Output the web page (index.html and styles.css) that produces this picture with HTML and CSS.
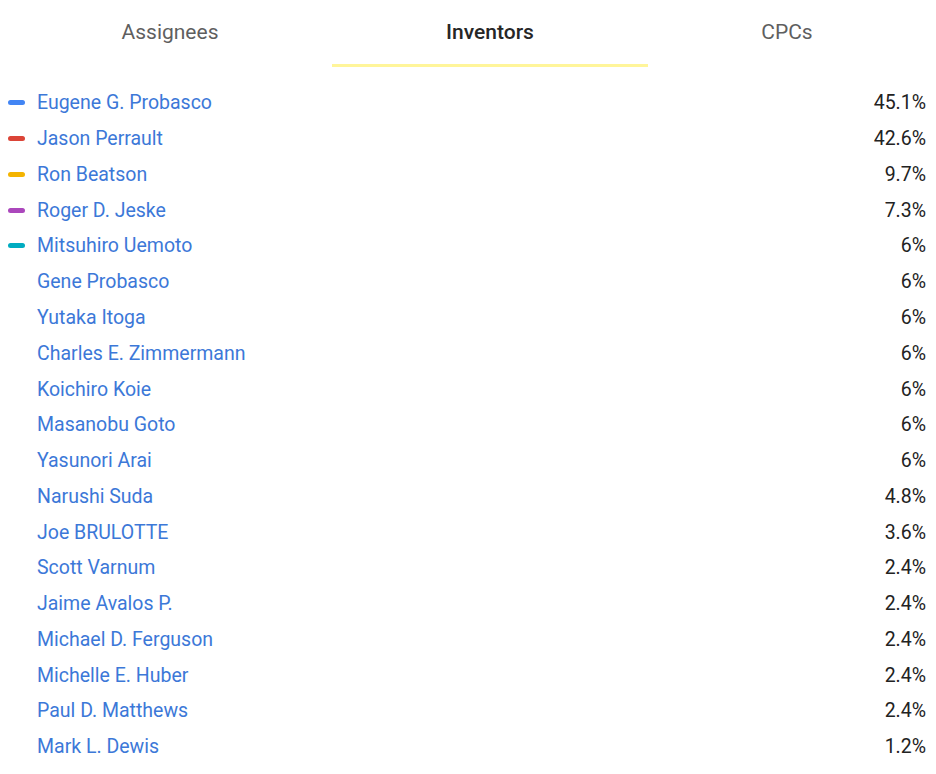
FILE: index.html
```html
<!DOCTYPE html>
<html>
<head>
<meta charset="utf-8">
<link rel="stylesheet" href="styles.css">
</head>
<body>
<div class="tabs">
  <div class="tab tab-a">Assignees</div>
  <div class="tab tab-b active">Inventors</div>
  <div class="tab tab-c">CPCs</div>
</div>
<ul class="list">
  <li class="row"><span class="mark m-blue"></span><span class="name">Eugene G. Probasco</span><span class="pct">45.1%</span></li>
  <li class="row"><span class="mark m-red"></span><span class="name">Jason Perrault</span><span class="pct">42.6%</span></li>
  <li class="row"><span class="mark m-yellow"></span><span class="name">Ron Beatson</span><span class="pct">9.7%</span></li>
  <li class="row"><span class="mark m-purple"></span><span class="name">Roger D. Jeske</span><span class="pct">7.3%</span></li>
  <li class="row"><span class="mark m-teal"></span><span class="name">Mitsuhiro Uemoto</span><span class="pct">6%</span></li>
  <li class="row"><span class="mark"></span><span class="name">Gene Probasco</span><span class="pct">6%</span></li>
  <li class="row"><span class="mark"></span><span class="name">Yutaka Itoga</span><span class="pct">6%</span></li>
  <li class="row"><span class="mark"></span><span class="name">Charles E. Zimmermann</span><span class="pct">6%</span></li>
  <li class="row"><span class="mark"></span><span class="name">Koichiro Koie</span><span class="pct">6%</span></li>
  <li class="row"><span class="mark"></span><span class="name">Masanobu Goto</span><span class="pct">6%</span></li>
  <li class="row"><span class="mark"></span><span class="name">Yasunori Arai</span><span class="pct">6%</span></li>
  <li class="row"><span class="mark"></span><span class="name">Narushi Suda</span><span class="pct">4.8%</span></li>
  <li class="row"><span class="mark"></span><span class="name">Joe BRULOTTE</span><span class="pct">3.6%</span></li>
  <li class="row"><span class="mark"></span><span class="name">Scott Varnum</span><span class="pct">2.4%</span></li>
  <li class="row"><span class="mark"></span><span class="name">Jaime Avalos P.</span><span class="pct">2.4%</span></li>
  <li class="row"><span class="mark"></span><span class="name">Michael D. Ferguson</span><span class="pct">2.4%</span></li>
  <li class="row"><span class="mark"></span><span class="name">Michelle E. Huber</span><span class="pct">2.4%</span></li>
  <li class="row"><span class="mark"></span><span class="name">Paul D. Matthews</span><span class="pct">2.4%</span></li>
  <li class="row"><span class="mark"></span><span class="name">Mark L. Dewis</span><span class="pct">1.2%</span></li>
</ul>
</body>
</html>
```
FILE: styles.css
```css
html, body {
  margin: 0;
  padding: 0;
  background: #ffffff;
  font-family: Roboto, "Liberation Sans", Arial, sans-serif;
}
.tabs {
  display: flex;
  height: 67px;
  padding-left: 12px;
}
.tab {
  box-sizing: border-box;
  height: 67px;
  padding-top: 18px;
  text-align: center;
  font-size: 21px;
  line-height: 28px;
  color: #5f5f5f;
  border-bottom: 3px solid transparent;
}
.tab-a { width: 316px; margin-right: 4px; }
.tab-b { width: 316px; }
.tab-c { width: 278px; }
.tab.active {
  color: #262626;
  font-weight: 500;
  border-bottom-color: #fff59a;
}
.list {
  list-style: none;
  margin: 0;
  padding: 18px 10px 0 8px;
}
.row {
  display: flex;
  align-items: center;
  height: 35.78px;
  font-size: 19.5px;
}
.mark {
  width: 17px;
  height: 5px;
  border-radius: 3px;
  margin-right: 12px;
  flex: none;
}
.m-blue { background: #4285f4; }
.m-red { background: #db4437; }
.m-yellow { background: #f4b400; }
.m-purple { background: #ab47bc; }
.m-teal { background: #00acc1; }
.name {
  flex: 1;
  color: #3c78d8;
}
.pct {
  color: #222222;
}
```
